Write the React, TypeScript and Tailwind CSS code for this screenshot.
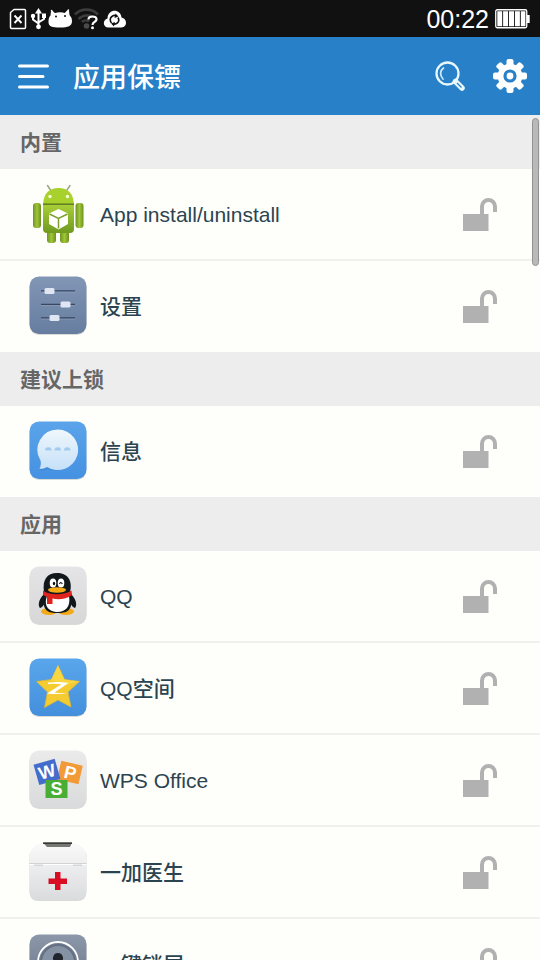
import { useState, type ReactNode } from "react";

const LATIN_CJK = "font-['Liberation_Sans','Noto_Sans_CJK_SC',sans-serif]";

function StatusIcons() {
  return (
    <svg width="118" height="22" viewBox="0 0 118 22" fill="none" aria-hidden="true">
      <path d="M5 1.500H15.500Q16.500 1.500 16.500 2.500V19.500Q16.500 20.500 15.500 20.500H2.500Q1.500 20.500 1.500 19.500V4.500Z" stroke="#fff" strokeWidth="1.500" strokeLinejoin="round" />
      <path d="M5.500 7.500l7 7.500M12.500 7.500l-7 7.500" stroke="#fff" strokeWidth="1.900" />
      <path d="M29.500 3V18M24 8v3.500l5.500 4M35 7v4l-5.500 3.500" stroke="#fff" strokeWidth="2" />
      <path d="M29.500 0l3.500 5.500h-7z" fill="#fff" />
      <circle cx="24" cy="8" r="2.200" fill="#fff" />
      <rect x="33" y="5.500" width="4" height="4.500" fill="#fff" />
      <circle cx="29.500" cy="18.800" r="2.400" fill="#fff" />
      <path d="M42.500 2.500l3 4M59.500 2l-4 4.500" stroke="#fff" strokeWidth="1.500" strokeLinecap="round" />
      <path d="M39.500 14C39.500 11 40 9 41.500 7.500L42 3L46 5Q51 3.500 56 5L60 2.500L60.500 7Q63 9.500 63 13C63 18 59 19.500 51 19.500S39.500 18.500 39.500 14Z" fill="#fff" />
      <circle cx="47" cy="8.500" r="1" fill="#111" />
      <circle cx="56" cy="8" r="1" fill="#111" />
      <path d="M66 6.500C72 0 83 0 89 6.500M69.500 11C74 6.500 80 6.500 84 9.500M73 14C75 12 78 12 80 13.500" stroke="#3c3c3c" strokeWidth="2.600" />
      <circle cx="77.500" cy="18" r="2.800" fill="#4a4a4a" />
      <path d="M79.500 11.500C79.500 7.500 87.500 7.500 87.500 11.500C87.500 14 83.500 13.500 83.500 17" stroke="#fff" strokeWidth="2.200" />
      <circle cx="83.500" cy="19.800" r="1.500" fill="#fff" />
      <path d="M99.500 19.500C94 19.500 93 12.500 98.500 10.500C99 0.500 111.500 0.500 112.500 9.500C119 11 118 19.500 112.500 19.500Z" fill="#fff" />
      <path d="M102.500 15C99 10 104 6 108 8M109 9.500C111.500 14 107 17.500 103.500 15.500" stroke="#111" strokeWidth="1.600" />
      <path d="M106.500 5.500l3 3-4 1.500zM105 18.500l-3-3 4-1.500z" fill="#111" />
    </svg>
  );
}

function BatteryIcon() {
  return (
    <svg width="35" height="20" viewBox="0 0 35 20" aria-hidden="true">
      <rect x="0.750" y="0.750" width="31" height="18" rx="1.500" fill="none" stroke="#fff" strokeWidth="1.300" />
      <path d="M2.300 2.300h4.900v15H2.300zM8.100 2.300h5v15h-5zM14 2.300h5v15h-5zM19.900 2.300h5v15h-5zM25.800 2.300h4.600v15h-4.600zM32 6h2.700v8H32z" fill="#fff" />
    </svg>
  );
}

function MenuIcon() {
  return (
    <svg width="31" height="25" viewBox="0 0 31 25" aria-hidden="true">
      <path d="M1.500 2H29.500M1.500 12.500H25M1.500 23H29.500" stroke="#fff" strokeWidth="3" strokeLinecap="round" />
    </svg>
  );
}

function SearchIcon() {
  return (
    <svg width="30" height="30" viewBox="0 0 30 30" fill="none" aria-hidden="true">
      <circle cx="12.500" cy="12.500" r="11" stroke="#e8f8fc" strokeWidth="2.300" />
      <path d="M8 18C4.500 14 5 9.500 8.500 7" stroke="#cdeaf8" strokeWidth="1.700" strokeLinecap="round" />
      <path d="M20.500 20.500L27 27" stroke="#e8f8fc" strokeWidth="5.500" strokeLinecap="round" />
      <path d="M22 22L26.500 26.500" stroke="#2780c8" strokeWidth="1.300" />
    </svg>
  );
}

function GearIcon() {
  return (
    <svg width="34" height="34" viewBox="0 0 34 34" aria-hidden="true">
      <g fill="#fff">
        <rect x="13.500" y="0" width="7" height="34" rx="2" />
        <rect x="13.500" y="0" width="7" height="34" rx="2" transform="rotate(45 17 17)" />
        <rect x="13.500" y="0" width="7" height="34" rx="2" transform="rotate(90 17 17)" />
        <rect x="13.500" y="0" width="7" height="34" rx="2" transform="rotate(135 17 17)" />
        <circle cx="17" cy="17" r="12.300" />
      </g>
      <circle cx="17" cy="17" r="5" fill="#fff" stroke="#2780c8" strokeWidth="3.200" />
    </svg>
  );
}

function UnlockedIcon() {
  return (
    <svg width="34" height="33" viewBox="0 0 34 33" aria-hidden="true">
      <rect x="0" y="16" width="25.500" height="17" fill="#b1b1b1" />
      <path d="M19 17V8.500a6.500 6.500 0 0 1 13 0V14" fill="none" stroke="#b1b1b1" strokeWidth="4" />
    </svg>
  );
}

function Tile({ id, from, to, children }: { id: string; from: string; to: string; children: ReactNode }) {
  return (
    <svg width="58" height="60" viewBox="0 0 58 60" className="shrink-0" aria-hidden="true">
      <defs>
        <linearGradient id={id} x1="0" y1="0" x2="0" y2="1">
          <stop offset="0" stopColor={from} />
          <stop offset="1" stopColor={to} />
        </linearGradient>
      </defs>
      <rect x="0.500" y="1.500" width="57" height="57.500" rx="9.500" fill="#000" opacity=".14" />
      <rect x="0.500" y="0.500" width="57" height="57.500" rx="9.500" fill={`url(#${id})`} />
      {children}
    </svg>
  );
}

function AndroidIcon() {
  return (
    <svg width="58" height="60" viewBox="0 0 58 60" className="shrink-0" aria-hidden="true">
      <defs>
        <linearGradient id="droid" x1="0" y1="0" x2="0" y2="1">
          <stop offset="0" stopColor="#a9cf37" />
          <stop offset="1" stopColor="#6f9a20" />
        </linearGradient>
        <linearGradient id="limb" x1="0" y1="0" x2="1" y2="0">
          <stop offset="0" stopColor="#6f9422" />
          <stop offset=".5" stopColor="#a0c537" />
          <stop offset="1" stopColor="#6b911f" />
        </linearGradient>
      </defs>
      <path d="M18.500 1.500l4 6M41 1.500l-4 6" stroke="#9aa782" strokeWidth="1.500" strokeLinecap="round" />
      <rect x="18" y="41" width="9" height="18" rx="3" fill="url(#limb)" />
      <rect x="31" y="41" width="9" height="18" rx="3" fill="url(#limb)" />
      <rect x="4" y="19" width="8" height="25" rx="3" fill="url(#limb)" />
      <rect x="46.500" y="19" width="8" height="25" rx="3" fill="url(#limb)" />
      <path d="M14 20C15 9 20 4 29.500 4S44 9 45 20Z" fill="#a8d12e" />
      <path d="M14 20.500H45V45Q45 49 41 49H18Q14 49 14 45Z" fill="url(#droid)" />
      <path d="M14 20.200H45" stroke="#4c6d14" strokeWidth="1.300" />
      <circle cx="21" cy="12.500" r="1.700" fill="#f6ffd8" />
      <circle cx="38.500" cy="12.500" r="1.700" fill="#f6ffd8" />
      <path d="M29.500 25L39 29.500V40L29.500 45.500L20 40V29.500Z" fill="#fff" />
      <path d="M20.500 30L29.500 34.500L38.500 30M29.500 34V44.500" stroke="#79a128" strokeWidth="1.500" fill="none" />
    </svg>
  );
}

function SlidersIcon() {
  return (
    <Tile id="sliders" from="#8296b6" to="#667d9f">
      <path d="M12 15H46M12 28.500H46M12 42H46" stroke="#38465f" strokeWidth="1.300" />
      <path d="M12 16H46M12 29.500H46M12 43H46" stroke="#93a5c2" strokeWidth=".7" />
      <rect x="15.500" y="12" width="10" height="6" rx="1.500" fill="#dfe5f2" />
      <rect x="31.500" y="25.500" width="10" height="6" rx="1.500" fill="#dfe5f2" />
      <rect x="20.500" y="39" width="10" height="6" rx="1.500" fill="#dfe5f2" />
    </Tile>
  );
}

function MessageIcon() {
  return (
    <Tile id="message" from="#5ba4ea" to="#4591e2">
      <defs>
        <linearGradient id="bubble" x1="0" y1="0" x2="0" y2="1">
          <stop offset="0" stopColor="#eff7fc" />
          <stop offset="1" stopColor="#c5e0f8" />
        </linearGradient>
      </defs>
      <path d="M29 9A20.500 20.500 0 1 1 19 48.500Q16 49.500 10.500 49.500Q12.500 45 11.500 40A20.500 20.500 0 0 1 29 9Z" fill="#2f78c6" opacity=".3" />
      <path d="M29 8.500A20.300 20.300 0 1 1 18 46Q15 48 10.500 48Q12.500 44 11.500 39.500A20.300 20.300 0 0 1 29 8.500Z" fill="url(#bubble)" />
      <path d="M16 29.500a3 3 0 0 1 6.500 0zM25.500 29.500a3 3 0 0 1 6.500 0zM35 29.500a3 3 0 0 1 6.500 0z" fill="#a2cbed" />
    </Tile>
  );
}

function PenguinIcon() {
  return (
    <Tile id="penguin" from="#e5e5e7" to="#d7d7d8">
      <path d="M15 28C9 34 9 40 11 42C13 42 15 38 17 36M42 28C48 34 48 40 46 42C44 42 42 38 40 36" fill="#12171c" />
      <ellipse cx="20" cy="45.500" rx="8" ry="3.500" fill="#f4a915" />
      <ellipse cx="37" cy="45.500" rx="8" ry="3.500" fill="#f4a915" />
      <path d="M15 27C12 46 20 47 28.500 47S45 46 42 27Z" fill="#12171c" />
      <path d="M18 30C14 41 21 46 28.500 46S42 41 40 30Z" fill="#fff" />
      <path d="M15 26C13 14 18 7 28 7S44 14 41 26C34 30 22 30 15 26Z" fill="#12171c" />
      <ellipse cx="24" cy="17" rx="3.300" ry="4.500" fill="#fff" />
      <ellipse cx="32" cy="17" rx="3.300" ry="4.500" fill="#fff" />
      <ellipse cx="25" cy="17.500" rx="1.200" ry="1.800" fill="#111" />
      <path d="M30.500 18q1.200-3 2.800 0" fill="none" stroke="#111" strokeWidth="1.200" />
      <ellipse cx="28" cy="24" rx="9" ry="2.700" fill="#f4a915" />
      <path d="M14 24.500C20 29.500 35 29.500 42.500 24.500L43 29C37 33.500 29 34 23.500 32.500V38H18V31L14 29Z" fill="#df241d" />
    </Tile>
  );
}

function StarIcon() {
  return (
    <Tile id="star" from="#5aa6ec" to="#438fdc">
      <path d="M29 7.500L35.500 21.500L50.500 23.500L39 34L42 49L29 42L15.500 49.500L18.500 34L7.500 23.500L22.500 21.500Z" fill="#f5cc30" stroke="#d9b63b" strokeWidth=".8" strokeLinejoin="round" />
      <path d="M29 7.500L35.500 21.500L50.500 23.500L36 27L22 22Z" fill="#fbdc4b" opacity=".7" />
      <path d="M19 24.500Q30 23.500 39.500 25L25.500 34.500Q34 35.500 40.500 34.500Q30 37 18 35.500L32.500 26.300Q26 25.500 19 26Z" fill="#fff" />
    </Tile>
  );
}

function WpsIcon() {
  return (
    <Tile id="wps" from="#ebebeb" to="#d9dadb">
      <g fontFamily="Liberation Sans, sans-serif" fontWeight="700" fontSize="18" fill="#fff" textAnchor="middle">
        <g transform="rotate(13 41 22)">
          <rect x="30" y="13" width="22" height="19" fill="#f29a37" />
          <text x="41.500" y="29">P</text>
        </g>
        <g transform="rotate(-16 17.500 22)">
          <rect x="7" y="11.500" width="22" height="21" fill="#446dcb" />
          <text x="18" y="28">W</text>
        </g>
        <rect x="16.500" y="30" width="22" height="18" fill="#48ae35" />
        <text x="27.500" y="45">S</text>
      </g>
    </Tile>
  );
}

function MedkitIcon() {
  return (
    <svg width="58" height="60" viewBox="0 0 58 60" className="shrink-0" aria-hidden="true">
      <defs>
        <linearGradient id="medkit" x1="0" y1="0" x2="0" y2="1">
          <stop offset="0" stopColor="#fafafa" />
          <stop offset="1" stopColor="#dadbdd" />
        </linearGradient>
      </defs>
      <path d="M11 2H47Q54 5 57.500 12V49.500Q57.500 59 48 59H10Q.5 59 .5 49.500V12Q4 5 11 2Z" fill="#000" opacity=".14" />
      <path d="M13 1H45Q53 4 57.500 11V48.500Q57.500 58 48 58H10Q.5 58 .5 48.500V11Q5 4 13 1Z" fill="url(#medkit)" />
      <path d="M14 .5H43L41 5H18Z" fill="#777874" />
      <path d="M14 1.200H43" stroke="#343832" strokeWidth="1.500" />
      <path d="M.5 21.500H57.500" stroke="#d0d2d3" strokeWidth="1" />
      <path d="M.5 22.500H57.500" stroke="#fff" strokeWidth="1" />
      <path d="M5 22.500h9v1.500H5zM44 22.500h9v1.500h-9z" fill="#d4d6d7" />
      <path d="M26 30h5.500v6.500H38V42h-6.500v6H26v-6h-6.500v-5.500H26z" fill="#d80d24" />
    </svg>
  );
}

function LockScreenIcon() {
  return (
    <Tile id="lockscreen" from="#8c98a9" to="#667385">
      <circle cx="29" cy="28" r="20" fill="#748193" stroke="#fff" strokeWidth="1.800" />
      <circle cx="29" cy="28" r="17" fill="#8592a4" stroke="#647184" strokeWidth="2" />
      <path d="M29 19a5 5 0 0 1 3 9l3 12H23l3-12a5 5 0 0 1 3-9z" fill="#20252c" />
    </Tile>
  );
}

type Entry = { name: string; icon: ReactNode };

const groups: { title: string; apps: Entry[] }[] = [
  {
    title: "内置",
    apps: [
      { name: "App install/uninstall", icon: <AndroidIcon /> },
      { name: "设置", icon: <SlidersIcon /> },
    ],
  },
  { title: "建议上锁", apps: [{ name: "信息", icon: <MessageIcon /> }] },
  {
    title: "应用",
    apps: [
      { name: "QQ", icon: <PenguinIcon /> },
      { name: "QQ空间", icon: <StarIcon /> },
      { name: "WPS Office", icon: <WpsIcon /> },
      { name: "一加医生", icon: <MedkitIcon /> },
      { name: "一键锁屏", icon: <LockScreenIcon /> },
    ],
  },
];

function AppRow({ name, icon }: Entry) {
  const [locked, setLocked] = useState(false);
  return (
    <li className="flex items-center py-[15px] pr-[43px] pl-[29px]">
      {icon}
      <span className="ml-[13px] flex-1 truncate pt-0.5 text-[21px] leading-8 font-medium text-[#2c4450]">{name}</span>
      <button type="button" aria-label={name} aria-pressed={locked} onClick={() => setLocked(!locked)}>
        <UnlockedIcon />
      </button>
    </li>
  );
}

export default function App() {
  return (
    <div className={`flex h-screen flex-col overflow-hidden bg-[#fefffb] ${LATIN_CJK}`}>
      <div className="flex h-[37px] shrink-0 items-center justify-between bg-[#111111] pr-[10px] pl-[9px] text-white">
        <StatusIcons />
        <div className="flex items-center gap-[6px]">
          <span className="text-[25px] leading-8">00:22</span>
          <BatteryIcon />
        </div>
      </div>
      <header className="flex h-[78px] shrink-0 items-center bg-[#2780c8] pr-[13px] pl-[18px] text-white">
        <button type="button" aria-label="菜单">
          <MenuIcon />
        </button>
        <h1 className="ml-6 flex-1 pt-1 text-[27px] leading-10 font-medium">应用保镖</h1>
        <button type="button" aria-label="搜索" className="mr-7">
          <SearchIcon />
        </button>
        <button type="button" aria-label="设置">
          <GearIcon />
        </button>
      </header>
      <main className="relative min-h-0 flex-1 overflow-hidden">
        {groups.map((group) => (
          <section key={group.title} className="pb-px">
            <h2 className="bg-[#ededee] pt-3 pb-[10px] pl-5 text-[21px] leading-8 font-bold text-[#666666]">
              {group.title}
            </h2>
            <ul className="divide-y-2 divide-[#f0f1ef]">
              {group.apps.map((app) => (
                <AppRow key={app.name} {...app} />
              ))}
            </ul>
          </section>
        ))}
        <div className="absolute top-[3px] right-[1px] h-[148px] w-[7px] rounded-full border border-[#929292] bg-[#b9b9b8]" />
      </main>
    </div>
  );
}
